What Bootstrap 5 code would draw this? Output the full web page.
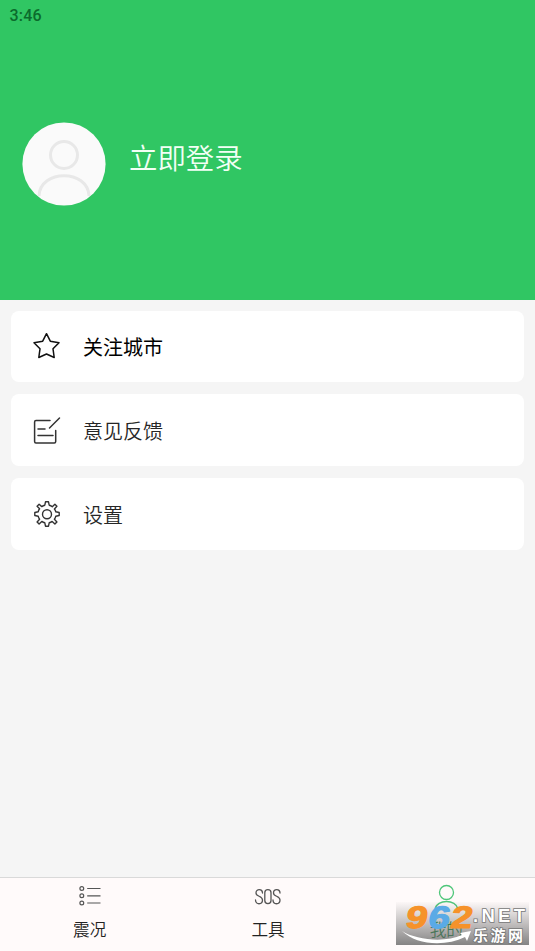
<!DOCTYPE html>
<html lang="zh-CN">
<head>
<meta charset="utf-8">
<meta name="viewport" content="width=device-width, initial-scale=1">
<title>我的</title>
<link href="https://cdn.jsdelivr.net/npm/bootstrap@5.3.0/dist/css/bootstrap.min.css" rel="stylesheet">
<style>
body{background:#f5f5f5;font-family:"Noto Sans CJK SC",sans-serif;color:#222;overflow:hidden}
.profile{height:299.5px;background:#30c663}
.clock{font:500 16px/20px Roboto,sans-serif;color:#0b6b2c;padding:6px 0 0 9.5px;height:25px;letter-spacing:.2px}
.person{padding:97px 0 0 22px;gap:23px}
.login{font-size:28.4px;line-height:40px;color:#f2fff5;margin-top:14.5px;font-weight:350}
.entries{padding:11px 11px 0;gap:12.3px}
.entry{height:71.5px;border-radius:8px;padding-left:21px;gap:21px;font-size:20px;line-height:30px;color:#262626;font-weight:350}
.entry:first-child{color:#000;font-weight:400}
.entry span{padding-top:2px}
svg{display:block;flex:none}
.tabs{height:74px;background:#fffafa;border-top:1px solid #d9d9d9}
.tab-label{font-size:16.6px;line-height:24px;margin-top:7px;padding-left:1px;font-weight:350}
.tab-icon{margin-top:4px}
.mine{color:#248b48}
.stamp{right:6px;bottom:6px}
</style>
<script src="https://cdn.jsdelivr.net/npm/bootstrap@5.3.0/dist/js/bootstrap.bundle.min.js"></script>
</head>
<body class="vh-100 d-flex flex-column">
<header class="profile flex-shrink-0">
  <div class="clock">3:46</div>
  <div class="person d-flex align-items-start">
    <svg width="84" height="84" viewBox="0 0 84 84"><circle cx="42" cy="42" r="41.6" fill="#fafafa"/><g fill="none" stroke="#e8e8e8" stroke-width="3"><circle cx="42" cy="33" r="13.5"/><path d="M17 74C18 47 66 47 67 74"/></g></svg>
    <div class="login">立即登录</div>
  </div>
</header>
<main class="entries d-flex flex-column flex-grow-1">
  <a class="entry bg-white d-flex align-items-center text-decoration-none">
    <svg width="30" height="30" viewBox="0 0 30 30" fill="none" stroke="#111" stroke-width="1.5" stroke-linejoin="round"><path d="M14.500 2.700 18.300 10.200 27 11.700 21 17.800 22.200 26.500 14.500 23 6.800 26.500 8 17.800 2 11.700 10.700 10.200Z"/></svg>
    <span>关注城市</span>
  </a>
  <a class="entry bg-white d-flex align-items-center text-decoration-none">
    <svg width="30" height="30" viewBox="0 0 30 30" fill="none" stroke="#333" stroke-width="1.5" stroke-linecap="round" stroke-linejoin="round"><path d="M18 5.500H4Q2.600 5.500 2.600 6.900V26.500Q2.600 28 4 28H22.300Q23.700 28 23.700 26.500V15.500M6 14H13M6 20.500H21M17.500 13 27.500 3"/></svg>
    <span>意见反馈</span>
  </a>
  <a class="entry bg-white d-flex align-items-center text-decoration-none">
    <svg width="30" height="30" viewBox="0 0 30 30" fill="none" stroke="#333" stroke-width="1.400" stroke-linejoin="round"><circle cx="15" cy="15.200" r="4.500"/><path d="M13.500 2.800H16.500L17.200 6.200Q18.800 6.500 20.300 7.800L22.900 5.300 24.900 7.300 22.400 10Q23.600 11.400 23.800 12.800L27.200 13.500V16.500L23.800 17.200Q23.500 18.800 22.400 20.200L24.900 22.900 22.900 24.900 20.200 22.400Q18.800 23.500 17.200 23.800L16.500 27.200H13.500L12.800 23.800Q11.200 23.500 9.800 22.400L7.100 24.900 5.100 22.900 7.600 20.200Q6.500 18.800 6.200 17.200L2.800 16.500V13.500L6.200 12.800Q6.500 11.200 7.600 9.800L5.100 7.300 7.100 5.300 9.800 7.600Q11.200 6.500 12.800 6.200Z"/></svg>
    <span>设置</span>
  </a>
</main>
<nav class="tabs row g-0 flex-shrink-0 text-center">
  <div class="col d-flex flex-column align-items-center">
    <svg class="tab-icon" width="28" height="28" viewBox="0 0 28 28" fill="none" stroke="#555" stroke-width="1.200"><circle cx="6.800" cy="6.500" r="1.900"/><circle cx="6.800" cy="13.800" r="1.900"/><circle cx="6.800" cy="21" r="1.900"/><path d="M12.200 6.500H25.500M12.200 13.800H25.500M12.200 21H25.500"/></svg>
    <div class="tab-label">震况</div>
  </div>
  <div class="col d-flex flex-column align-items-center">
    <svg class="tab-icon" width="28" height="28" viewBox="-1 -.5 28 28" fill="none" stroke="#555" stroke-width="1.300" stroke-linecap="round"><path d="M8.500 10.500C8.500 6 2 6 2 10.500 2 14.500 8.500 13 8.500 17.500 8.500 22.500 1.500 22.500 1.500 17.500M26 10.500C26 6 19.500 6 19.500 10.500 19.500 14.500 26 13 26 17.500 26 22.500 19 22.500 19 17.500"/><rect x="10.800" y="7.200" width="6.200" height="14" rx="3.100"/></svg>
    <div class="tab-label">工具</div>
  </div>
  <div class="col d-flex flex-column align-items-center mine">
    <svg class="tab-icon" width="28" height="28" viewBox="0 0 28 28" fill="none" stroke="#4fc67a" stroke-width="1.300"><circle cx="14.500" cy="10.500" r="7"/><path d="M3 27C5 17 24 17 26 27"/></svg>
    <div class="tab-label">我的</div>
  </div>
</nav>
<div class="stamp position-absolute">
  <svg width="133" height="43" viewBox="0 0 133 43">
    <defs><linearGradient id="shade" x2="0" y2="1"><stop stop-color="#666" stop-opacity=".02"/><stop offset=".5" stop-color="#666" stop-opacity=".4"/><stop offset="1" stop-color="#666" stop-opacity=".8"/></linearGradient></defs>
    <path fill="url(#shade)" d="M0 0H133V43H0Z"/>
    <path d="M6 29C20 38 49 41 66 33L64 31 75 29 71 39 69 35C49 45 20 43 6 29Z" fill="#fff"/>
    <g font-family="Liberation Sans,sans-serif" font-weight="700" font-size="31" stroke-width="1.200" stroke-linejoin="round" transform="translate(8.500 25.500) skewX(-10)">
      <text x="0" textLength="21.500" lengthAdjust="spacingAndGlyphs" fill="#f6922a" stroke="#f6922a">9</text>
      <text x="22.500" textLength="21.500" lengthAdjust="spacingAndGlyphs" fill="#5aaae6" stroke="#5aaae6">6</text>
      <text x="45" textLength="21.500" lengthAdjust="spacingAndGlyphs" fill="#f6922a" stroke="#f6922a">2</text>
    </g>
    <g fill="#fff" stroke="#777" stroke-width="1.600" paint-order="stroke" font-weight="700">
      <text x="77" y="20" font-family="Liberation Sans,sans-serif" font-size="18.500" textLength="52" lengthAdjust="spacing">.NET</text>
      <text x="77" y="39" font-family="Noto Sans CJK SC,sans-serif" font-size="15" textLength="50" lengthAdjust="spacing">乐游网</text>
    </g>
  </svg>
</div>
</body>
</html>
